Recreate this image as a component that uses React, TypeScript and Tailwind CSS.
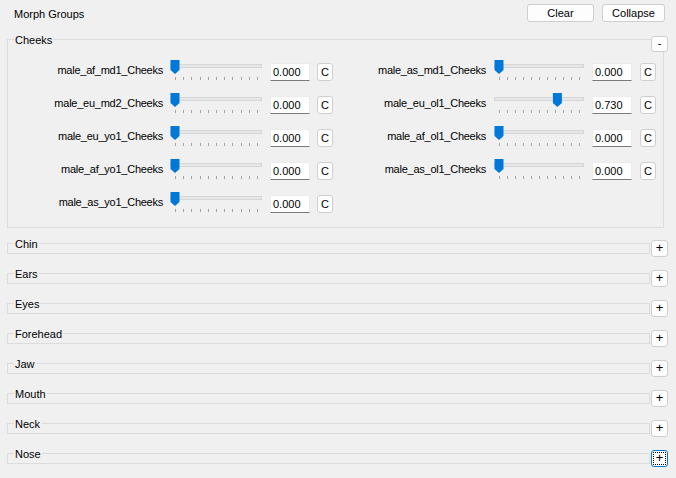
import * as React from "react";

const leftRows: [string, number][] = [
  ["male_af_md1_Cheeks", 0],
  ["male_eu_md2_Cheeks", 0],
  ["male_eu_yo1_Cheeks", 0],
  ["male_af_yo1_Cheeks", 0],
  ["male_as_yo1_Cheeks", 0],
];

const rightRows: [string, number][] = [
  ["male_as_md1_Cheeks", 0],
  ["male_eu_ol1_Cheeks", 0.73],
  ["male_af_ol1_Cheeks", 0],
  ["male_as_ol1_Cheeks", 0],
];

const collapsed = ["Chin", "Ears", "Eyes", "Forehead", "Jaw", "Mouth", "Neck", "Nose"];

function Slider({ width, value }: { width: number; value: number }) {
  const cx = 5 + value * (width - 10);
  const ticks = Array.from({ length: 11 }, (_, i) => Math.round(5 + (i * (width - 10)) / 10) + 0.5);
  return (
    <svg width={width} height={21} className="block shrink-0">
      <rect x={0.5} y={4.5} width={width - 1} height={3} fill="#e7e7e7" stroke="#d6d6d6" />
      {ticks.map((x, i) => (
        <line key={i} x1={x} x2={x} y1={17} y2={20} stroke="#a3a3a3" strokeWidth={1} />
      ))}
      <polygon
        points={`${cx - 4.5},0 ${cx + 4.5},0 ${cx + 4.5},10 ${cx},14 ${cx - 4.5},10`}
        fill="#0078d7"
      />
    </svg>
  );
}

function MorphRow({
  label,
  value,
  labelW,
  sliderW,
  gap,
}: {
  label: string;
  value: number;
  labelW: number;
  sliderW: number;
  gap: "left" | "right";
}) {
  return (
    <div className="flex items-start h-[21px]">
      <div
        className="h-[21px] flex items-center justify-end pt-[1px] whitespace-nowrap tracking-[-0.25px]"
        style={{ width: labelW }}
      >
        {label}
      </div>
      <div className={gap === "left" ? "ml-[7px]" : "ml-[8px]"}>
        <Slider width={sliderW} value={value} />
      </div>
      <div className="ml-[8px] mt-[3px] w-[40px] h-[18px] bg-white border border-[#ececec] border-b-[#7a7a7a] pl-[2px] leading-[16px]">
        {value.toFixed(3)}
      </div>
      <button
        className={
          (gap === "left" ? "ml-[7px]" : "ml-[8px]") +
          " mt-[3px] w-[16px] h-[18px] rounded-[3px] border border-[#cfcfcf] bg-[#fdfdfd] leading-[16px] text-center"
        }
      >
        C
      </button>
    </div>
  );
}

export default function App() {
  return (
    <div
      className="w-[676px] h-[478px] overflow-hidden bg-[#f0f0f0] text-[11px] text-black"
      style={{ fontFamily: '"Liberation Sans", Arial, sans-serif' }}
    >
      {/* header */}
      <div className="flex items-center pt-[4px] pl-[14px] pr-[11px]">
        <div className="flex-1 pt-[2px]">Morph Groups</div>
        <button className="w-[67px] h-[18px] rounded-[3px] border border-[#cfcfcf] bg-[#fdfdfd] leading-[16px]">
          Clear
        </button>
        <button className="ml-[8px] w-[63px] h-[18px] rounded-[3px] border border-[#cfcfcf] bg-[#fdfdfd] leading-[16px]">
          Collapse
        </button>
      </div>

      {/* expanded group */}
      <div className="relative mt-[10px]">
        <fieldset className="ml-[7px] w-[657px] border border-[#dcdcdc] pt-[13px] pb-[14px]">
          <legend className="ml-[6px] px-[1px] leading-[14px]">Cheeks</legend>
          <div className="flex">
            <div className="flex flex-col gap-[12px]">
              {leftRows.map(([l, v]) => (
                <MorphRow key={l} label={l} value={v} labelW={155} sliderW={92} gap="left" />
              ))}
            </div>
            <div className="flex flex-col gap-[12px]">
              {rightRows.map(([l, v]) => (
                <MorphRow key={l} label={l} value={v} labelW={153} sliderW={90} gap="right" />
              ))}
            </div>
          </div>
        </fieldset>
        <button className="absolute left-[651px] top-[3px] w-[17px] h-[16px] rounded-[3px] border border-[#cfcfcf] bg-[#fdfdfd] leading-[13px] text-center">
          -
        </button>
      </div>

      {/* collapsed groups */}
      <div className="mt-[9px] flex flex-col gap-[10px]">
        {collapsed.map((name, i) => (
          <div key={name} className="flex items-start">
            <fieldset className="ml-[7px] w-[643px] border border-[#dcdcdc] pb-[2px]">
              <legend className="ml-[6px] px-[1px] leading-[14px]">{name}</legend>
            </fieldset>
            <button
              className={
                "ml-[1px] mt-[3px] w-[17px] h-[17px] rounded-[3px] border bg-[#fdfdfd] leading-[14px] text-center text-[13px] " +
                (i === collapsed.length - 1
                  ? "border-[#0078d7] outline-1 outline-dotted outline-black outline-offset-[-3px]"
                  : "border-[#cfcfcf]")
              }
            >
              +
            </button>
          </div>
        ))}
      </div>
    </div>
  );
}
